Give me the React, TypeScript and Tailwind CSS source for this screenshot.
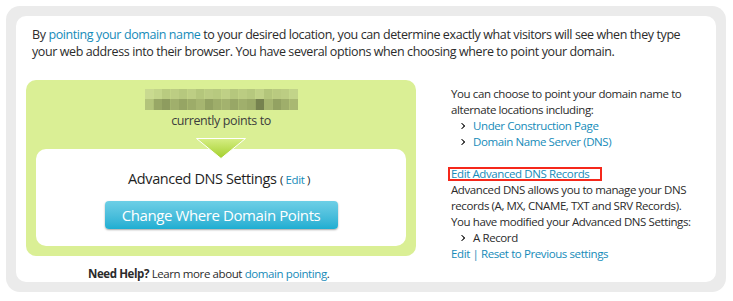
import React from 'react';

const topRow = ['#c9da90', '#c3d58a', '#b9cb80', '#bccd83', '#b6c87e', '#bdce84', '#b4c67c', '#bacb82', '#b7c97f', '#bfd086', '#b5c77d', '#bbcc82', '#b6c87e', '#c0d187', '#b3c57b', '#b9ca80', '#bccd83', '#c2d489'];
const bottomRow = ['#b3c47b', '#98a766', '#8e9c5f', '#a0af6c', '#96a564', '#9dac69', '#a6b570', '#93a262', '#9ead6a', '#a3b26e', '#98a766', '#a0af6c', '#9aa967', '#76824f', '#a5b46f', '#93a262', '#9fae6b', '#a9b872'];

function Mosaic() {
  return (
    <svg width="153" height="21" viewBox="0 0 153 21" className="block mx-auto">
      {topRow.map((c, i) => (
        <rect key={'t' + i} x={i * 8.5} y={0} width={8.6} height={10} fill={c} />
      ))}
      {bottomRow.map((c, i) => (
        <rect key={'b' + i} x={i * 8.5} y={10} width={8.6} height={11} fill={c} />
      ))}
    </svg>
  );
}

function Bullet() {
  return (
    <svg width="5" height="6" viewBox="0 0 5 6" className="inline-block mr-[7px] mb-[1px]">
      <rect x="0" y="0" width="2" height="1" fill="#777" />
      <rect x="1" y="1" width="2" height="1" fill="#555" />
      <rect x="2" y="2" width="2" height="2" fill="#444" />
      <rect x="1" y="4" width="2" height="1" fill="#555" />
      <rect x="0" y="5" width="2" height="1" fill="#777" />
    </svg>
  );
}

export default function App() {
  return (
    <div className="bg-white w-[733px] h-[301px] pt-[6px] pl-[6px] font-['Open_Sans',sans-serif] tracking-[-0.025em] text-[#2b2b2b]">
      <div className="w-[720px] h-[286px] bg-[#ebebeb] rounded-[14px] p-[10px]">
        <div className="h-full bg-white rounded-[10px] px-[10px] pt-[10px]">
          {/* intro */}
          <p className="px-[6px] text-[12.5px] leading-[17px]">
            By <a className="text-[#168bb9]">pointing your domain name</a> to your desired location, you can determine exactly what visitors will see when they type your web address into their browser. You have several options when choosing where to point your domain.
          </p>

          <div className="flex mt-[20px]">
            {/* current pointing */}
            <div className="w-[390px] shrink-0">
              <div className="relative bg-[#daef95] rounded-[10px] pt-[9px] px-[10px] pb-[10px]">
                <Mosaic />
                <div className="text-center text-[12.5px] leading-[18px] mt-[2px] text-[#3d3d3d]">currently points to</div>
                <div className="relative mt-[19px] bg-white rounded-[10px] pt-[20px] pb-[17px] text-center">
                  <svg width="50" height="21" viewBox="0 0 50 21" className="absolute left-1/2 -translate-x-1/2 -top-[11px]">
                    <defs>
                      <linearGradient id="tri" x1="0" y1="0" x2="0" y2="1">
                        <stop offset="0" stopColor="#d6ee84" />
                        <stop offset="1" stopColor="#a3cf2c" />
                      </linearGradient>
                    </defs>
                    <polygon points="0.5,0.5 49.5,0.5 25,20.5" fill="url(#tri)" stroke="#fff" strokeWidth="1" />
                  </svg>
                  <div className="text-[14.5px] leading-[20px] text-[#1f1f1f] pr-[4px]">
                    Advanced DNS Settings <span className="text-[11.5px]">( <a className="text-[#168bb9]">Edit</a> )</span>
                  </div>
                  <button className="mt-[11px] w-[233px] h-[28px] rounded-[4px] bg-gradient-to-b from-[#6dcfe6] to-[#1caed2] text-white text-[15px] leading-[28px] shadow-[0_1px_2px_rgba(0,0,0,0.35)]">
                    Change Where Domain Points
                  </button>
                </div>
              </div>
              <div className="mt-[10px] pl-[62px] text-[11.5px] leading-[16px]">
                <b className="font-bold">Need Help?</b> Learn more about <a className="text-[#168bb9]">domain pointing</a>.
              </div>
            </div>

            {/* options */}
            <div className="ml-[35px] pt-[6px] text-[11.5px] leading-[16px] w-[252px]">
              <div>You can choose to point your domain name to alternate locations including:</div>
              <ul className="pl-[10px]">
                <li><Bullet /><a className="text-[#168bb9]">Under Construction Page</a></li>
                <li><Bullet /><a className="text-[#168bb9]">Domain Name Server (DNS)</a></li>
              </ul>
              <div className="mt-[16px] h-[16px] flex items-center">
                <span className="-ml-[3px] inline-block border-2 border-[#f5281b] pl-[1px] pr-[11px] leading-[10px] text-[#168bb9]">Edit Advanced DNS Records</span>
              </div>
              <div>Advanced DNS allows you to manage your DNS records (A, MX, CNAME, TXT and SRV Records).</div>
              <div>You have modified your Advanced DNS Settings:</div>
              <ul className="pl-[10px]">
                <li><Bullet />A Record</li>
              </ul>
              <div>
                <a className="text-[#168bb9]">Edit</a> <span className="text-[#168bb9]">|</span> <a className="text-[#168bb9]">Reset to Previous settings</a>
              </div>
            </div>
          </div>
        </div>
      </div>
    </div>
  );
}
